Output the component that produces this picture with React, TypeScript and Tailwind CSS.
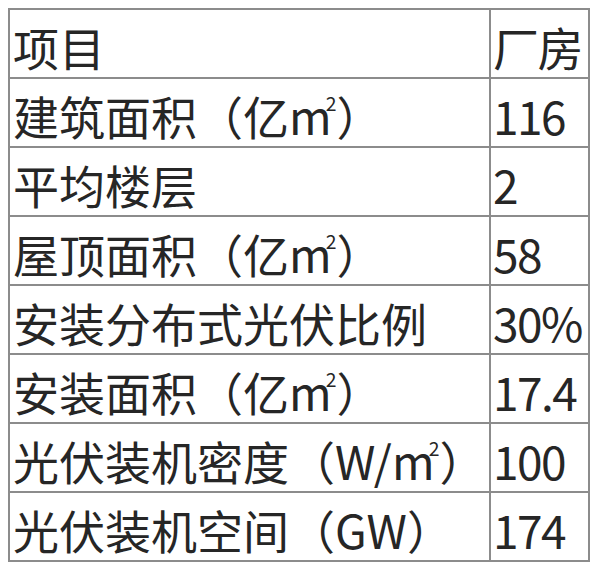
function Sqm() {
  return (
    <span className="inline-block">
      m<span className="inline-block align-top text-[0.42em] leading-none -ml-[0.3em] mt-[0.12em]">2</span>
    </span>
  );
}

const rows: [React.ReactNode, string][] = [
  ["项目", "厂房"],
  [<>建筑面积（亿<Sqm />）</>, "116"],
  ["平均楼层", "2"],
  [<>屋顶面积（亿<Sqm />）</>, "58"],
  ["安装分布式光伏比例", "30%"],
  [<>安装面积（亿<Sqm />）</>, "17.4"],
  [<>光伏装机密度（W/<Sqm />）</>, "100"],
  ["光伏装机空间（GW）", "174"],
];

export default function App() {
  return (
    <div className="w-[600px] h-[573px] bg-white pl-2 pt-2">
      <table
        className="table-fixed w-[580px] border-collapse text-[#262626] text-[46px] leading-none"
        style={{ fontFamily: '"Noto Sans CJK SC", "Noto Sans", sans-serif' }}
      >
        <colgroup>
          <col className="w-[481px]" />
          <col className="w-[99px]" />
        </colgroup>
        <tbody>
          {rows.map(([label, value], i) => (
            <tr key={i} className="h-[69px]">
              <td className="border-2 border-[#8c8c8c] pl-[3px] pt-[4px] align-middle whitespace-nowrap">
                {label}
              </td>
              <td className="border-2 border-[#8c8c8c] pl-[2px] pt-[4px] align-middle whitespace-nowrap tracking-[-1.5px]">
                {value}
              </td>
            </tr>
          ))}
        </tbody>
      </table>
    </div>
  );
}
